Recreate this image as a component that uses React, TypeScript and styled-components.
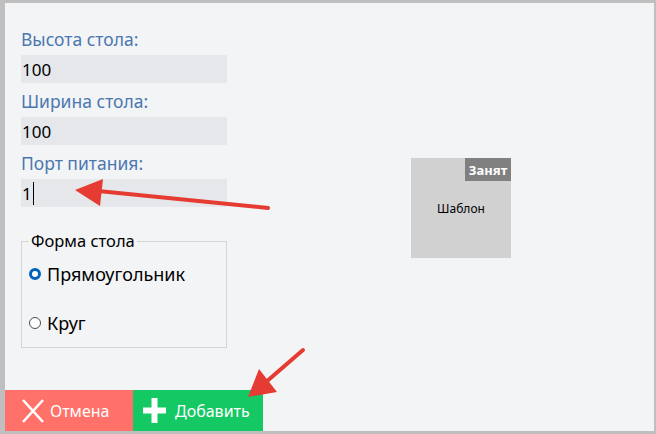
import React from 'react';
import styled, { createGlobalStyle } from 'styled-components';

const GlobalStyle = createGlobalStyle`
  html, body {
    margin: 0;
    padding: 0;
    width: 656px;
    height: 434px;
    overflow: hidden;
  }
  body {
    font-family: "Noto Sans", "Open Sans", sans-serif;
  }
  * { box-sizing: border-box; }
`;

const fields = [
  { id: 'height', label: 'Высота стола:', value: '100', focused: false },
  { id: 'width', label: 'Ширина стола:', value: '100', focused: false },
  { id: 'port', label: 'Порт питания:', value: '1', focused: true },
];

const shapes = [
  { id: 'rect', label: 'Прямоугольник', checked: true },
  { id: 'circle', label: 'Круг', checked: false },
];

const App: React.FC = () => {
  return (
    <>
      <GlobalStyle />
      <Frame>
        <Panel>
          <Content>
            <FormColumn>
              {fields.map((f) => (
                <Field key={f.id}>
                  <Label>{f.label}</Label>
                  <InputBox>
                    {f.value}
                    {f.focused && <Caret />}
                  </InputBox>
                </Field>
              ))}
              <ShapeSet>
                <Legend>Форма стола</Legend>
                {shapes.map((s) => (
                  <Option key={s.id}>
                    <Radio checked={s.checked} />
                    <OptionText>{s.label}</OptionText>
                  </Option>
                ))}
              </ShapeSet>
            </FormColumn>
            <Preview>
              <TableCard>
                <Badge>Занят</Badge>
                Шаблон
              </TableCard>
            </Preview>
          </Content>
          <Footer>
            <ActionButton $bg="#ff7169" $pad="16px" $gap="5px" $width="128px">
              <svg width="24" height="26" viewBox="0 0 24 26">
                <path d="M2 2 L22 24 M22 2 L2 24" stroke="#fff" strokeWidth="2.6" fill="none" />
              </svg>
              Отмена
            </ActionButton>
            <ActionButton $bg="#14c864" $pad="10px" $gap="9px" $width="130px">
              <svg width="23" height="25" viewBox="0 0 23 25">
                <path d="M11.5 0 V25 M0 12.5 H23" stroke="#fff" strokeWidth="6" fill="none" />
              </svg>
              Добавить
            </ActionButton>
          </Footer>
        </Panel>
        <Annotations width="656" height="434" viewBox="0 0 656 434">
          <line x1="268" y1="208" x2="98" y2="191" stroke="#e53b32" strokeWidth="4" strokeLinecap="round" />
          <polygon points="75,190 103,179 100,206" fill="#e53b32" />
          <line x1="303" y1="350" x2="266" y2="382" stroke="#e53b32" strokeWidth="4" strokeLinecap="round" />
          <polygon points="248,397 259,369 277,392" fill="#e53b32" />
        </Annotations>
      </Frame>
    </>
  );
};

const Frame = styled.div`
  position: relative;
  width: 656px;
  height: 434px;
  background: #bfbfbf;
  padding: 3px 2px 3px 5px;
`;

const Panel = styled.div`
  display: flex;
  flex-direction: column;
  height: 100%;
  background: #f3f4f6;
`;

const Content = styled.div`
  flex: 1;
  display: flex;
  padding: 18px 0 0 16px;
`;

const FormColumn = styled.div`
  display: flex;
  flex-direction: column;
  width: 206px;
`;

const Field = styled.div`
  display: flex;
  flex-direction: column;
`;

const Label = styled.div`
  height: 34px;
  display: flex;
  align-items: flex-end;
  padding-bottom: 4px;
  color: #4b77b0;
  font-size: 17.5px;
  line-height: 24px;
  white-space: nowrap;
`;

const InputBox = styled.div`
  position: relative;
  display: flex;
  align-items: center;
  height: 28px;
  padding-left: 1px;
  background: #e6e7ea;
  color: #000;
  font-size: 17px;
`;

const Caret = styled.span`
  display: inline-block;
  width: 1px;
  height: 23px;
  margin-left: 1px;
  background: #000;
`;

const ShapeSet = styled.fieldset`
  margin: 26px 0 0;
  padding: 0 7px;
  border: 1px solid #d3d4d6;
  min-width: 0;
`;

const Legend = styled.legend`
  padding: 0 2px;
  font-size: 16.5px;
  line-height: 16px;
  color: #000;
`;

const Option = styled.div`
  display: flex;
  align-items: center;
  gap: 6px;
  height: 49px;
`;

const Radio = styled.span<{ checked: boolean }>`
  width: 12px;
  height: 12px;
  border-radius: 50%;
  background: #fff;
  border: ${({ checked }) => (checked ? '3.5px solid #0061be' : '1px solid #4d4d4d')};
`;

const OptionText = styled.span`
  font-size: 18px;
  color: #000;
`;

const Preview = styled.div`
  flex: 1;
  padding: 137px 0 0 184px;
`;

const TableCard = styled.div`
  position: relative;
  width: 100px;
  height: 100px;
  display: flex;
  align-items: center;
  justify-content: center;
  background: #d1d1d1;
  font-size: 12px;
  color: #000;
`;

const Badge = styled.span`
  position: absolute;
  top: 0;
  right: 0;
  width: 46px;
  height: 23px;
  display: flex;
  align-items: center;
  justify-content: center;
  background: #808080;
  color: #fff;
  font-size: 13px;
  font-weight: 700;
`;

const Footer = styled.div`
  display: flex;
  height: 41px;
`;

const ActionButton = styled.button<{ $bg: string; $pad: string; $gap: string; $width: string }>`
  display: flex;
  align-items: center;
  gap: ${({ $gap }) => $gap};
  width: ${({ $width }) => $width};
  height: 41px;
  padding: 0 0 0 ${({ $pad }) => $pad};
  border: none;
  background: ${({ $bg }) => $bg};
  color: #fff;
  font-family: inherit;
  font-size: 16px;
  cursor: pointer;
`;

const Annotations = styled.svg`
  position: absolute;
  top: 0;
  left: 0;
  pointer-events: none;
`;

export default App;
